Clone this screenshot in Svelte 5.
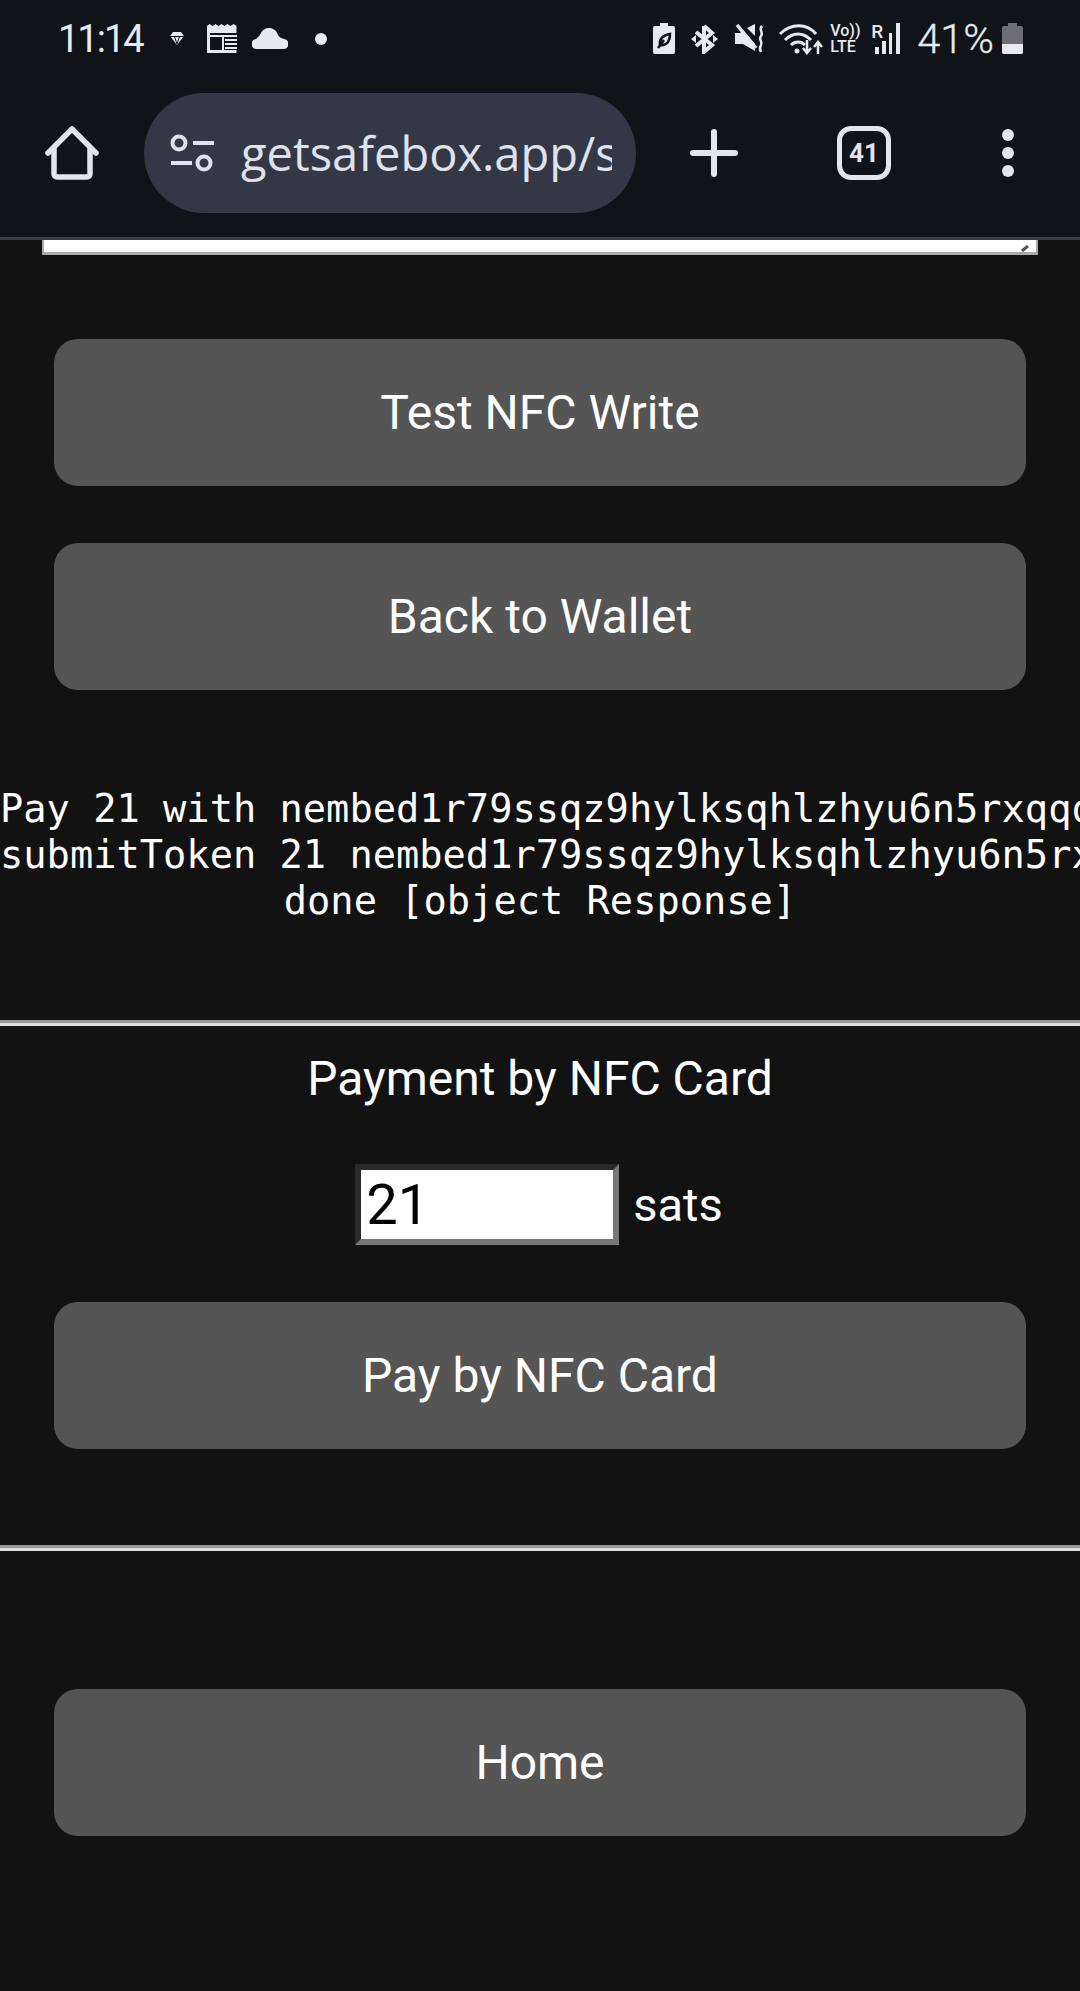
<script>
  let amount = $state('21');

  const logLines = [
    'Pay 21 with nembed1r79ssqz9hylksqhlzhyu6n5rxqqqqqqqqqqqqqqqq',
    'submitToken 21 nembed1r79ssqz9hylksqhlzhyu6n5rxqqqqqqqqqqqqq',
    'done [object Response]'
  ];
</script>

<header class="chrome">
  <div class="status">
    <span class="time">11:14</span>
    <svg class="i-gem" width="14" height="13" viewBox="0 0 14 13"><path d="M3 0h8l3 4-7 9-7-9z" fill="#e8e9ee"/><path d="M0 4.500h14M4.500 4.500L7 12l2.500-7.500" stroke="#101318" stroke-width="1" fill="none"/></svg>
    <svg class="i-cal" width="33" height="29" viewBox="0 0 33 29"><path d="M0 2l2.500-2 3 2 3-2 3 2 3-2 3 2 3-2 3 2 3-2 3 2V29H0z" fill="#e8e9ee"/><path d="M3 9h27v17H3z" fill="#101318"/><path d="M3 12h27M16 12v14" stroke="#e8e9ee" stroke-width="2"/><path d="M18 16h12M18 20h12M18 24h12" stroke="#e8e9ee" stroke-width="2"/></svg>
    <svg class="i-cloud" width="36" height="21" viewBox="0 0 36 21"><path d="M5 21a5 5 0 0 1-1-10C6 9 7 8 8 7 10 2 13 0 17 0c4 0 7 2 9 7 1 2 3 3 6 4a5 5 0 0 1-1 10z" fill="#e8e9ee"/></svg>
    <span class="dot"></span>

    <span class="spacer"></span>

    <svg class="i-bat" width="22" height="31" viewBox="0 0 22 31"><path d="M7 0h8v3h5a2 2 0 0 1 2 2v24a2 2 0 0 1-2 2H2a2 2 0 0 1-2-2V5a2 2 0 0 1 2-2h5z" fill="#e8e9ee"/><path d="M7 22c-1-6 3-10 10-11 0 7-3 12-10 11zM5 25l6-8" stroke="#101318" stroke-width="2.500" fill="none"/></svg>
    <svg class="i-bt" width="27" height="30" viewBox="0 0 27 30"><path d="M13 2v26l8-7-16-13M13 2l8 7-16 13" stroke="#e8e9ee" stroke-width="4" fill="none"/><path d="M0 15l5-4v8zM27 15l-5-4v8z" fill="#e8e9ee"/></svg>
    <svg class="i-mute" width="30" height="29" viewBox="0 0 30 29"><path d="M0 9h5l3-3 12 14v7L8 20H0z" fill="#e8e9ee"/><path d="M2 1l19 23" stroke="#e8e9ee" stroke-width="3.500"/><path d="M12 4l8-4v12z" fill="#e8e9ee"/><path d="M27 2c-4 4 2 6-1 10s2 5 0 9-1 5 0 7" stroke="#e8e9ee" stroke-width="2.500" fill="none"/></svg>
    <svg class="i-wifi" width="45" height="32" viewBox="0 0 45 32"><path d="M2 11c11-11 27-11 36 0M7 17c8-8 18-8 26 0M13 22c4-4 10-4 14 0" stroke="#e8e9ee" stroke-width="3" fill="none"/><circle cx="19" cy="28" r="2.500" fill="#e8e9ee"/><path d="M29 17v12M25 25l4 5 4-5M40 31V20M36 24l4-5 4 5" stroke="#e8e9ee" stroke-width="2.500" fill="none"/></svg>
    <span class="volte"><span>Vo))</span><span>LTE</span></span>
    <span class="signal">
      <span class="roam">R</span>
      <svg width="30" height="31" viewBox="0 0 30 31"><path d="M4 24h4v7H4zM11 18h4v13h-4zM18 10h3v21h-3zM25 0h4v31h-4z" fill="#e8e9ee"/></svg>
    </span>
    <span class="pct">41%</span>
    <svg class="i-level" width="21" height="31" viewBox="0 0 21 31"><path d="M6 0h9v3h4a2 2 0 0 1 2 2v24a2 2 0 0 1-2 2H2a2 2 0 0 1-2-2V5a2 2 0 0 1 2-2h4z" fill="#6c6e72"/><path d="M0 21h21v8a2 2 0 0 1-2 2H2a2 2 0 0 1-2-2z" fill="#e8e9ee"/></svg>
  </div>

  <div class="toolbar">
    <svg class="home" width="54" height="54" viewBox="0 0 54 54"><path d="M3 27L27 3l24 24M9 22v26a3 3 0 0 0 3 3h30a3 3 0 0 0 3-3V22" stroke="#e3e5ec" stroke-width="5.500" fill="none" stroke-linecap="round" stroke-linejoin="round"/></svg>
    <div class="pill">
      <svg width="44" height="38" viewBox="0 0 44 38"><g stroke="#dfe2ec" stroke-width="4" fill="none"><circle cx="9" cy="9" r="6.500"/><circle cx="34" cy="29" r="6.500"/><path d="M23 9h21M1 29h21"/></g></svg>
      <span class="url">getsafebox.app/s</span>
    </div>
    <svg class="plus" width="48" height="48" viewBox="0 0 48 48"><path d="M24 3v42M3 24h42" stroke="#e3e5ec" stroke-width="6" stroke-linecap="round"/></svg>
    <span class="tabs">41</span>
    <svg class="more" width="12" height="48" viewBox="0 0 12 48"><circle cx="6" cy="6" r="6" fill="#e3e5ec"/><circle cx="6" cy="24" r="6" fill="#e3e5ec"/><circle cx="6" cy="42" r="6" fill="#e3e5ec"/></svg>
  </div>
</header>

<main>
  <div class="textarea-end">
    <svg width="8" height="7" viewBox="0 0 8 7"><path d="M7 1L1 6" stroke="#555" stroke-width="3"/></svg>
  </div>

  <section class="actions">
    <button>Test NFC Write</button>
    <button>Back to Wallet</button>
  </section>

  <pre class="log">{#each logLines as line}<div>{line}</div>{/each}</pre>

  <hr class="rule-one" />

  <section class="pay">
    <h2>Payment by NFC Card</h2>
    <div class="amount">
      <input type="text" bind:value={amount} />
      <span>sats</span>
    </div>
    <button>Pay by NFC Card</button>
  </section>

  <hr class="rule-two" />

  <section class="footer">
    <button>Home</button>
  </section>
</main>

<style>
  :global(body) {
    background: #121212;
    overflow: hidden;
  }

  .chrome {
    height: 237px;
    background: #101318;
    border-bottom: 3px solid #3a3d42;
    color: #e8e9ee;
    font-family: Roboto, sans-serif;
  }

  .status {
    display: flex;
    align-items: center;
    height: 77px;
    padding: 0 57px 0 58px;
  }

  .time {
    width: 84px;
    font-size: 38px;
    letter-spacing: -2px;
  }

  .i-gem { margin-left: 28px; }
  .i-cal { margin-left: 23px; }
  .i-cloud { margin-left: 12px; }

  .dot {
    width: 12px;
    height: 12px;
    margin-left: 27px;
    border-radius: 50%;
    background: #e8e9ee;
  }

  .spacer { flex: 1; }

  .i-bt { margin-left: 16px; }
  .i-mute { margin-left: 17px; }
  .i-wifi { margin-left: 13px; }

  .volte {
    display: flex;
    flex-direction: column;
    width: 31px;
    margin-left: 7px;
    font-size: 16px;
    font-weight: 500;
    line-height: 16px;
    white-space: nowrap;
  }

  .signal {
    position: relative;
    display: flex;
    margin-left: 10px;
  }

  .roam {
    position: absolute;
    left: 0;
    top: -3px;
    font-size: 19px;
    font-weight: 500;
  }

  .pct {
    margin-left: 16px;
    font-size: 41.500px;
    font-weight: 300;
    -webkit-text-stroke: 0.3px #e8e9ee;
  }

  .i-level { margin-left: 8px; }

  .toolbar {
    display: flex;
    align-items: center;
    height: 120px;
    margin-top: 16px;
    padding-left: 45px;
  }

  .pill {
    display: flex;
    align-items: center;
    gap: 27px;
    box-sizing: border-box;
    width: 492px;
    height: 120px;
    margin-left: 45px;
    padding: 0 24px 0 26px;
    border-radius: 60px;
    background: #343846;
    color: #dfe2ec;
  }

  .pill svg { flex: none; }

  .url {
    overflow: hidden;
    font-family: 'Open Sans', sans-serif;
    font-size: 47px;
    white-space: nowrap;
  }

  .plus { margin-left: 54px; }

  .tabs {
    box-sizing: border-box;
    width: 54px;
    height: 54px;
    margin-left: 99px;
    border: 5px solid #e3e5ec;
    border-radius: 14px;
    color: #e3e5ec;
    font-size: 26px;
    font-weight: 700;
    line-height: 44px;
    text-align: center;
  }

  .more { margin-left: 111px; }

  main {
    color: #fff;
    font-family: Roboto, sans-serif;
    text-align: center;
  }

  .textarea-end {
    display: flex;
    align-items: flex-end;
    justify-content: flex-end;
    box-sizing: border-box;
    width: 996px;
    height: 15px;
    margin-left: 42px;
    padding-right: 7px;
    border: 2px solid #a9a9a9;
    border-top: 0;
    border-bottom-width: 3px;
    background: #fff;
  }

  button {
    display: block;
    box-sizing: border-box;
    width: 972px;
    height: 147px;
    margin: 0 auto;
    border: 0;
    border-radius: 24px;
    background: #555;
    color: #fff;
    font-family: Roboto, sans-serif;
    font-size: 48px;
  }

  .actions {
    display: flex;
    flex-direction: column;
    gap: 57px;
    padding-top: 84px;
  }

  .log {
    margin: 0;
    padding-top: 96px;
    font-family: 'DejaVu Sans Mono', monospace;
    font-size: 38.700px;
    line-height: 46px;
  }

  .log div {
    white-space: pre;
  }

  hr {
    box-sizing: border-box;
    height: 6px;
    margin: 0;
    border: 0;
    border-top: 3px solid #9a9a9a;
    border-bottom: 3px solid #e0e0e0;
  }

  .rule-one { margin-top: 96px; }

  h2 {
    margin: 0;
    padding-top: 25px;
    font-size: 48px;
    font-weight: 400;
    line-height: 56px;
  }

  .amount {
    display: flex;
    align-items: center;
    justify-content: center;
    gap: 14px;
    height: 81px;
    margin-top: 57px;
    padding-right: 2px;
    font-size: 47px;
  }

  input {
    box-sizing: border-box;
    width: 264px;
    height: 81px;
    padding: 0 5px;
    border: 6px solid;
    border-color: #2a2a2a #767676 #767676 #2a2a2a;
    background: #fff;
    color: #000;
    font-family: Roboto, sans-serif;
    font-size: 56px;
  }

  .pay button { margin-top: 57px; }

  .rule-two { margin-top: 96px; }

  .footer { padding-top: 138px; }
</style>
